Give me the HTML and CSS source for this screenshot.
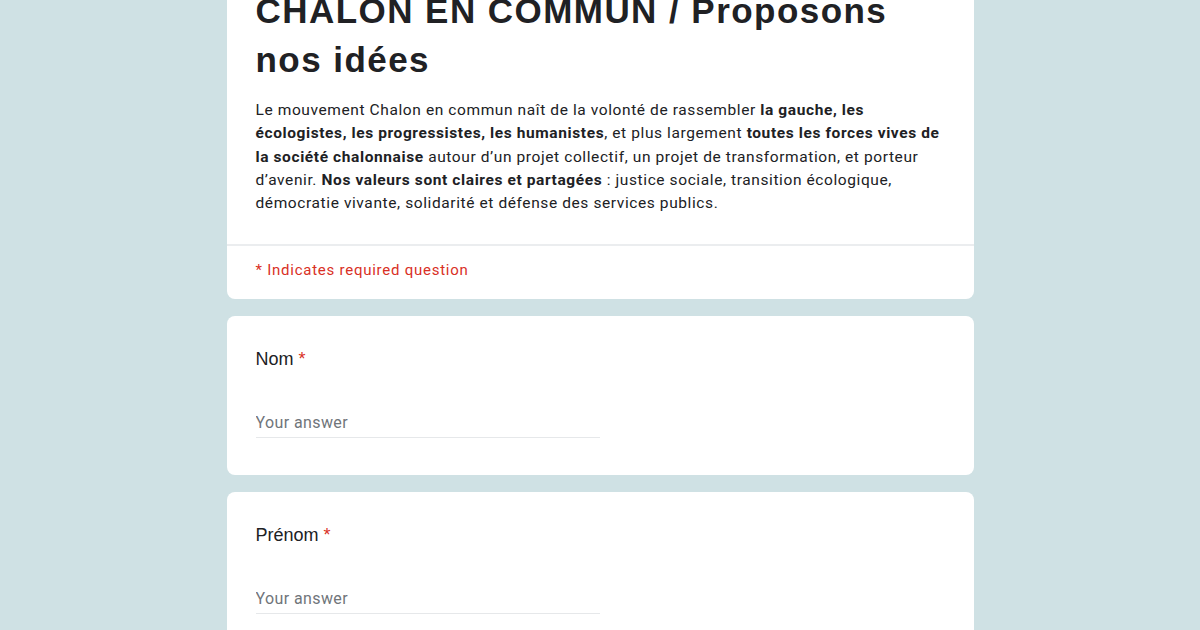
FILE: index.html
```html
<!DOCTYPE html>
<html lang="fr">
<head>
<meta charset="utf-8">
<title>CHALON EN COMMUN / Proposons nos idées</title>
<link rel="stylesheet" href="styles.css">
</head>
<body>
<main class="form">
  <section class="card header-card">
    <div class="header-body">
      <h1 class="title">CHALON EN COMMUN / Proposons nos idées</h1>
      <p class="desc">Le mouvement Chalon en commun naît de la volonté de rassembler <b>la gauche, les écologistes, les progressistes, les humanistes</b>, et plus largement <b>toutes les forces vives de la société chalonnaise</b> autour d’un projet collectif, un projet de transformation, et porteur d’avenir. <b>Nos valeurs sont claires et partagées</b> : justice sociale, transition écologique, démocratie vivante, solidarité et défense des services publics.</p>
    </div>
    <div class="required-note">* Indicates required question</div>
  </section>

  <section class="card question">
    <div class="q-label">Nom <span class="star">*</span></div>
    <input class="answer" type="text" placeholder="Your answer">
  </section>

  <section class="card question">
    <div class="q-label">Prénom <span class="star">*</span></div>
    <input class="answer" type="text" placeholder="Your answer">
  </section>
</main>
</body>
</html>
```

FILE: styles.css
```css
html, body {
  margin: 0;
  padding: 0;
}
body {
  background: #cfe1e4;
  color: #202124;
  font-family: Roboto, "Liberation Sans", Arial, sans-serif;
  overflow: hidden;
}
.form {
  width: 747px;
  margin: -20px auto 0;
  display: flex;
  flex-direction: column;
  gap: 17px;
}
.card {
  background: #ffffff;
  border-radius: 8px;
}
.header-body {
  padding: 6px 29px 29px;
  border-bottom: 2px solid #ebedef;
}
.title {
  max-width: 660px;
  margin: 0;
  font-family: "Liberation Sans", Arial, sans-serif;
  font-weight: 700;
  font-size: 35px;
  line-height: 49px;
  letter-spacing: 1.45px;
  color: #202124;
}
.desc {
  margin: 15px 0 0;
  font-size: 15.5px;
  line-height: 23.3px;
  letter-spacing: 0.6px;
  color: #202124;
}
.desc b {
  font-weight: 700;
}
.required-note {
  padding: 14px 29px 19px;
  font-size: 15px;
  line-height: 20px;
  letter-spacing: 0.75px;
  color: #d93025;
}
.question {
  padding: 31px 29px 37px;
  display: flex;
  flex-direction: column;
  gap: 39px;
}
.q-label {
  font-family: "Liberation Sans", Arial, sans-serif;
  font-size: 18px;
  line-height: 24px;
  color: #202124;
}
.star {
  color: #d93025;
}
.answer {
  width: 50%;
  box-sizing: border-box;
  margin: 0;
  padding: 0 0 3px;
  border: 0;
  border-bottom: 1.5px solid #e6e8ea;
  outline: none;
  background: transparent;
  font-family: Roboto, sans-serif;
  font-size: 16px;
  line-height: 24px;
  height: 28px;
  letter-spacing: 0.4px;
  color: #202124;
}
.answer::placeholder {
  color: #70757a;
  opacity: 1;
}
```
